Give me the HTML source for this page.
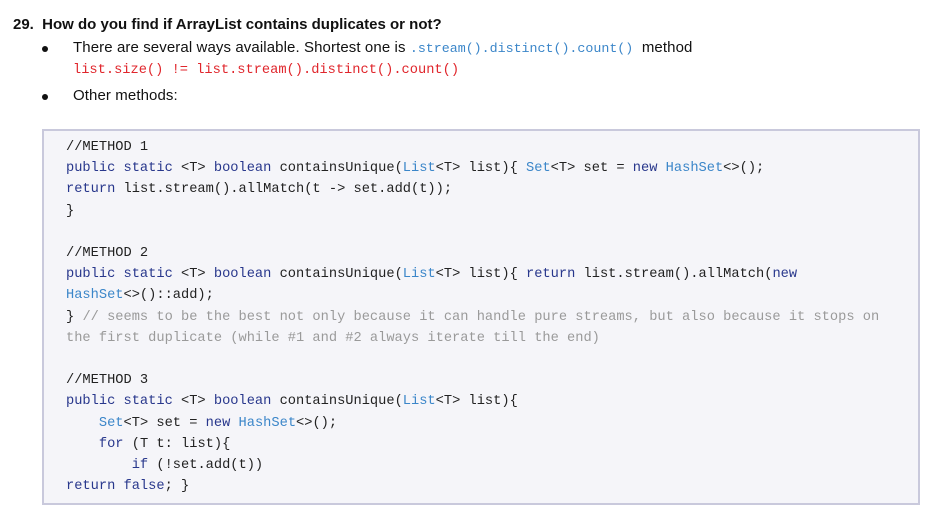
<!DOCTYPE html>
<html><head><meta charset="utf-8"><style>
body{margin:0;width:940px;height:523px;background:#fff;font-family:"Liberation Sans",sans-serif;color:#111;position:relative;overflow:hidden}
.a{position:absolute;white-space:pre}
.t{font-size:15px;font-weight:bold;left:13px;top:16px}
.b{font-size:15px;letter-spacing:0.1px;left:73px}
.dot{position:absolute;left:42px;width:6px;height:6px;border-radius:50%;background:#111}
.m{font-family:"Liberation Mono",monospace;font-size:13.3px;letter-spacing:0}
.box{position:absolute;left:42px;top:129px;width:874px;height:372px;background:#f5f5f9;border:2px solid #c9c9dc}
pre{position:absolute;left:66px;top:137px;margin:0;font-family:"Liberation Mono",monospace;font-size:13.7px;line-height:21.2px;color:#222}
.k{color:#28378c}.ty{color:#3b86c9}.c{color:#9a9a9a}
</style></head><body>
<div class="a t">29.&nbsp; How do you find if ArrayList contains duplicates or not?</div>
<div class="dot" style="top:46px"></div>
<div class="a b" style="top:39px">There are several ways available. Shortest one is <span class="m" style="color:#3b86c9;letter-spacing:0">.stream().distinct().count()</span>  method</div>
<div class="a m" style="left:73px;top:63px;color:#e0262c;font-size:13.7px">list.size() != list.stream().distinct().count()</div>
<div class="dot" style="top:94px"></div>
<div class="a b" style="top:87px">Other methods:</div>
<div class="box"></div>
<pre>//METHOD 1
<span class="k">public static</span> &lt;T&gt; <span class="k">boolean</span> containsUnique(<span class="ty">List</span>&lt;T&gt; list){ <span class="ty">Set</span>&lt;T&gt; set = <span class="k">new</span> <span class="ty">HashSet</span>&lt;&gt;();
<span class="k">return</span> list.stream().allMatch(t -&gt; set.add(t));
}

//METHOD 2
<span class="k">public static</span> &lt;T&gt; <span class="k">boolean</span> containsUnique(<span class="ty">List</span>&lt;T&gt; list){ <span class="k">return</span> list.stream().allMatch(<span class="k">new</span>
<span class="ty">HashSet</span>&lt;&gt;()::add);
} <span class="c">// seems to be the best not only because it can handle pure streams, but also because it stops on
the first duplicate (while #1 and #2 always iterate till the end)</span>

//METHOD 3
<span class="k">public static</span> &lt;T&gt; <span class="k">boolean</span> containsUnique(<span class="ty">List</span>&lt;T&gt; list){
    <span class="ty">Set</span>&lt;T&gt; set = <span class="k">new</span> <span class="ty">HashSet</span>&lt;&gt;();
    <span class="k">for</span> (T t: list){
        <span class="k">if</span> (!set.add(t))
<span class="k">return false</span>; }</pre>
</body></html>
